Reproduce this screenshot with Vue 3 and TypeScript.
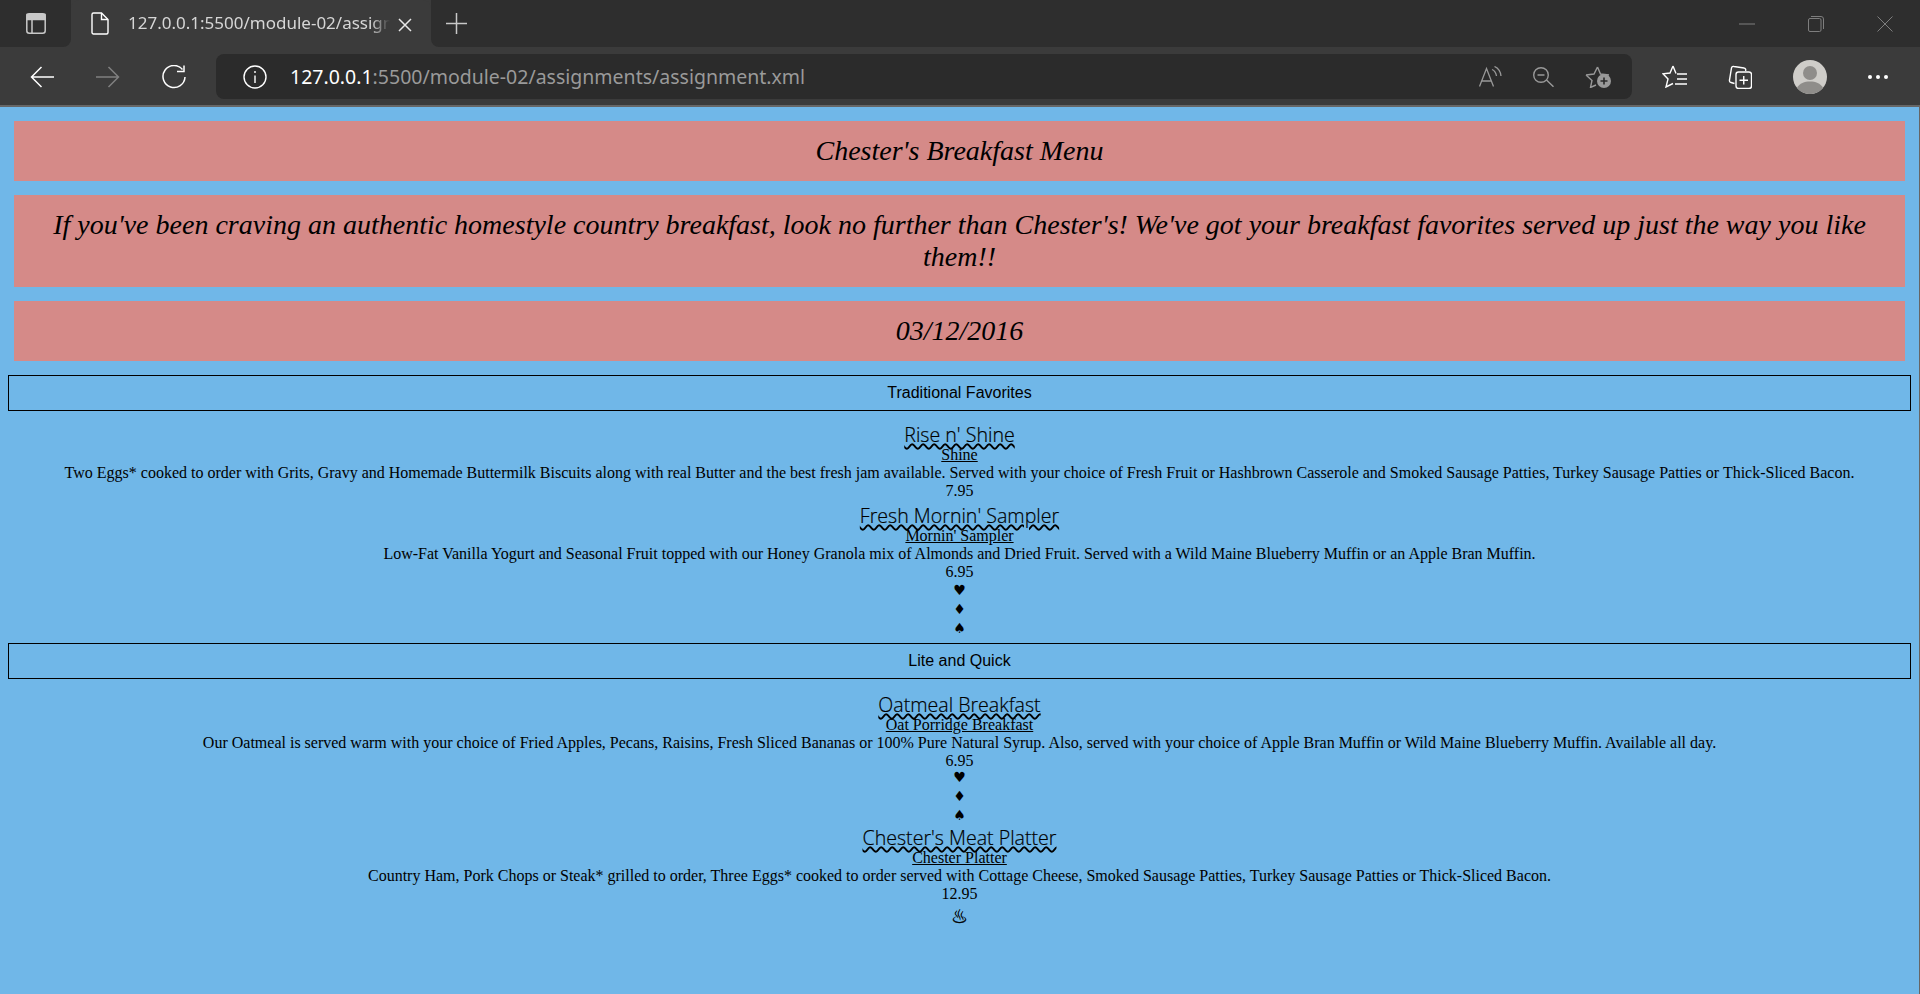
<script setup lang="ts">
interface MenuItem {
  name: string;
  alt: string;
  desc: string;
  price: string;
  marks: string[];
}

const favorites: MenuItem[] = [
  {
    name: "Rise n' Shine",
    alt: "Shine",
    desc: "Two Eggs* cooked to order with Grits, Gravy and Homemade Buttermilk Biscuits along with real Butter and the best fresh jam available. Served with your choice of Fresh Fruit or Hashbrown Casserole and Smoked Sausage Patties, Turkey Sausage Patties or Thick-Sliced Bacon.",
    price: "7.95",
    marks: [],
  },
  {
    name: "Fresh Mornin' Sampler",
    alt: "Mornin' Sampler",
    desc: "Low-Fat Vanilla Yogurt and Seasonal Fruit topped with our Honey Granola mix of Almonds and Dried Fruit. Served with a Wild Maine Blueberry Muffin or an Apple Bran Muffin.",
    price: "6.95",
    marks: ["♥", "♦", "♠"],
  },
];

const lite: MenuItem[] = [
  {
    name: "Oatmeal Breakfast",
    alt: "Oat Porridge Breakfast",
    desc: "Our Oatmeal is served warm with your choice of Fried Apples, Pecans, Raisins, Fresh Sliced Bananas or 100% Pure Natural Syrup. Also, served with your choice of Apple Bran Muffin or Wild Maine Blueberry Muffin. Available all day.",
    price: "6.95",
    marks: ["♥", "♦", "♠"],
  },
  {
    name: "Chester's Meat Platter",
    alt: "Chester Platter",
    desc: "Country Ham, Pork Chops or Steak* grilled to order, Three Eggs* cooked to order served with Cottage Cheese, Smoked Sausage Patties, Turkey Sausage Patties or Thick-Sliced Bacon.",
    price: "12.95",
    marks: ["♨"],
  },
];

const sections = [
  { title: "Traditional Favorites", items: favorites },
  { title: "Lite and Quick", items: lite },
];
</script>

<template>
  <div class="browser">
    <div class="tabstrip">
      <div class="tab-toggle">
        <svg width="20" height="21" viewBox="0 0 20 21" fill="none" stroke="#c8c8c8" stroke-width="1.5">
          <rect x="0.8" y="0.8" width="18.4" height="19.4" rx="2.5" />
          <path d="M1 1.500h18v5H1z" fill="#c8c8c8" />
          <path d="M6 6.500v14" />
        </svg>
      </div>
      <div class="tab">
        <svg class="tab-doc" width="18" height="23" viewBox="0 0 18 23" fill="none" stroke="#fff" stroke-width="1.4">
          <path d="M1 2.500A1.500 1.500 0 0 1 2.500 1h8l6.500 6.500v13a1.500 1.500 0 0 1-1.500 1.500h-13A1.500 1.500 0 0 1 1 20.500z" />
          <path d="M10.500 1v6.500H17" />
        </svg>
        <span class="tab-title">127.0.0.1:5500/module-02/assign</span>
        <svg class="tab-close" width="14" height="14" viewBox="0 0 14 14" stroke="#e8e8e8" stroke-width="1.5">
          <path d="M1 1l12 12M13 1L1 13" />
        </svg>
      </div>
      <div class="strip-rest">
        <svg class="new-tab" width="21" height="21" viewBox="0 0 21 21" stroke="#c8c8c8" stroke-width="1.5">
          <path d="M10.500 0v21M0 10.500h21" />
        </svg>
        <div class="window-btns">
          <svg width="16" height="16" viewBox="0 0 16 16" stroke="#7e7e7e" stroke-width="1">
            <path d="M0 8h16" />
          </svg>
          <svg width="16" height="16" viewBox="0 0 16 16" fill="none" stroke="#7e7e7e" stroke-width="1">
            <rect x="0.500" y="2.500" width="12.500" height="13" rx="1.500" />
            <path d="M3 .5h10a2.500 2.500 0 0 1 2.500 2.500v10" />
          </svg>
          <svg width="16" height="16" viewBox="0 0 16 16" stroke="#7e7e7e" stroke-width="1">
            <path d="M.5.5l15 15M15.500.5l-15 15" />
          </svg>
        </div>
      </div>
    </div>

    <div class="toolbar">
      <svg class="nav-back" width="24" height="22" viewBox="0 0 24 22" fill="none" stroke="#fff" stroke-width="1.500">
        <path d="M24 11H1.500M11.500 1L1.500 11l10 10" />
      </svg>
      <svg class="nav-forward" width="24" height="22" viewBox="0 0 24 22" fill="none" stroke="#808080" stroke-width="1.500">
        <path d="M0 11h22.500M12.500 1l10 10-10 10" />
      </svg>
      <svg class="nav-reload" width="24" height="24" viewBox="0 0 24 24" fill="none" stroke="#fff" stroke-width="1.500">
        <path d="M20.500 4.500A11 11 0 1 0 23 12" />
        <path d="M22 .5v6h-7" />
      </svg>
      <div class="address">
        <svg width="24" height="24" viewBox="0 0 24 24" fill="none" stroke="#fff" stroke-width="1.400">
          <circle cx="12" cy="12" r="11" />
          <path d="M12 10.500v7.500M12 6v2" />
        </svg>
        <span class="url"><b>127.0.0.1</b>:5500/module-02/assignments/assignment.xml</span>
        <div class="address-icons">
          <svg width="23" height="21" viewBox="0 0 23 21" fill="none" stroke="#999" stroke-width="1.300">
            <path d="M.5 20.500L7.500 2.500l7 18M2.500 15h10" />
            <path d="M13 3.500c2.500 1 4 3.500 4.500 6.500M15.500.5c3.500 1.500 6 5 6.500 9.500" />
          </svg>
          <svg width="21" height="20" viewBox="0 0 21 20" fill="none" stroke="#999" stroke-width="1.400">
            <circle cx="8" cy="8" r="7.300" />
            <path d="M4.500 8h7M13.500 13l7 6.800" />
          </svg>
          <svg width="27" height="22" viewBox="0 0 27 22" fill="none" stroke="#999" stroke-width="1.400">
            <path d="M12.500 1l3 7 8.500 1M1 9l8-1 3.500-7M1 9l6 5.500L5.500 21.500l5.500-2.500" />
            <circle cx="19" cy="15" r="7" fill="#999" stroke="none" />
            <path d="M19 11.500v7M15.500 15h7" stroke="#2b2b2b" stroke-width="1.600" />
          </svg>
        </div>
      </div>
      <div class="tool-icons">
        <svg width="25" height="23" viewBox="0 0 25 23" fill="none" stroke="#fff" stroke-width="1.400">
          <path d="M11 1l3 7.500M11 1L8 8l-7 .8 5 5.200-2 8 7-3.500M15 9h10M15 14h10M13 19h12" />
        </svg>
        <svg width="24" height="24" viewBox="0 0 24 24" fill="none" stroke="#fff" stroke-width="1.400">
          <path d="M6.500 18.500L3 17.500a2 2 0 0 1-1.500-2.500L3.500 3A2 2 0 0 1 6 1.500l10 1.500a2 2 0 0 1 1.500 3" />
          <rect x="8" y="7" width="15.500" height="16.500" rx="2.500" />
          <path d="M15.750 11v8.500M11.500 15.250h8.500" />
        </svg>
        <svg width="34" height="34" viewBox="0 0 34 34">
          <circle cx="17" cy="17" r="17" fill="#cfcdc9" />
          <circle cx="17" cy="13" r="7" fill="#8f8d8a" />
          <path d="M4 28c2.500-5 7.500-6.500 13-6.500s10.500 1.500 13 6.500a17 17 0 0 1-26 0z" fill="#8f8d8a" />
        </svg>
        <svg class="tool-more" width="20" height="4" viewBox="0 0 20 4" fill="#fff">
          <circle cx="2" cy="2" r="2" />
          <circle cx="10" cy="2" r="2" />
          <circle cx="18" cy="2" r="2" />
        </svg>
      </div>
    </div>
    <div class="toolbar-line" />

    <main class="page">
      <header class="banners">
        <h1 class="banner">Chester's Breakfast Menu</h1>
        <p class="banner">If you've been craving an authentic homestyle country breakfast, look no further than Chester's! We've got your breakfast favorites served up just the way you like them!!</p>
        <p class="banner">03/12/2016</p>
      </header>

      <section v-for="section in sections" :key="section.title" class="section">
        <h2 class="section-title">{{ section.title }}</h2>
        <article v-for="item in section.items" :key="item.name" class="item">
          <div class="item-name">{{ item.name }}</div>
          <div class="item-alt">{{ item.alt }}</div>
          <div>{{ item.desc }}</div>
          <div>{{ item.price }}</div>
          <div v-if="item.marks.length" class="marks">
            <div v-for="mark in item.marks" :key="mark" class="mark" :class="{ springs: mark === '♨' }">{{ mark }}</div>
          </div>
        </article>
      </section>
    </main>
  </div>
</template>

<style>
html,
body {
  margin: 0;
  background: #70b7e8;
}
</style>

<style scoped>
.browser {
  min-height: 994px;
  display: flex;
  flex-direction: column;
  background: #70b7e8;
  font-family: "Liberation Serif", serif;
  color: #000;
}

/* browser chrome */
.tabstrip {
  height: 48px;
  flex: none;
  background: #3b3b3b;
  display: flex;
  font-family: "Noto Sans", sans-serif;
}

.tab-toggle {
  width: 71px;
  height: 47px;
  box-sizing: border-box;
  padding: 13px 0 0 26px;
  background: #2e2e2e;
  border-radius: 0 0 8px 0;
}

.tab {
  width: 360px;
  height: 47px;
  box-sizing: border-box;
  padding: 12px 19px 0 20px;
  background: #3b3b3b;
  border-radius: 8px 8px 0 0;
  display: flex;
}

.tab-doc {
  flex: none;
}

.tab-title {
  margin-left: 19px;
  flex: 1;
  white-space: nowrap;
  font-size: 17px;
  line-height: 22px;
  color: #d6d6d6;
  -webkit-mask-image: linear-gradient(90deg, #000 90%, transparent 97%);
  mask-image: linear-gradient(90deg, #000 90%, transparent 97%);
}

.tab-close {
  flex: none;
  margin-top: 6px;
}

.strip-rest {
  flex: 1;
  height: 47px;
  background: #2e2e2e;
  border-radius: 0 0 0 8px;
  display: flex;
}

.new-tab {
  margin: 13px 0 0 15px;
}

.window-btns {
  margin: 16px 27px 0 auto;
  display: flex;
  gap: 53px;
}

.toolbar {
  height: 57px;
  flex: none;
  background: #3b3b3b;
  display: flex;
  align-items: center;
  font-family: "Noto Sans", sans-serif;
}

.nav-back {
  margin-left: 30px;
}

.nav-forward {
  margin-left: 42px;
}

.nav-reload {
  margin-left: 42px;
}

.address {
  margin-left: 30px;
  width: 1416px;
  height: 45px;
  box-sizing: border-box;
  padding: 0 20px 0 27px;
  background: #2b2b2b;
  border-radius: 8px;
  display: flex;
  align-items: center;
}

.url {
  margin-left: 23px;
  font-size: 19.5px;
  color: #9a9a9a;
  white-space: nowrap;
}

.url b {
  font-weight: 400;
  color: #fff;
}

.address-icons {
  margin-left: auto;
  display: flex;
  align-items: center;
  gap: 31px;
}

.tool-icons {
  padding-left: 30px;
  display: flex;
  align-items: center;
  gap: 41px;
}

.toolbar-line {
  height: 2px;
  flex: none;
  background: #666;
}

/* page */
.page {
  flex: 1;
  padding: 8px;
  border-right: 1px solid #666;
  font-size: 16px;
  line-height: 18px;
  text-align: center;
}

.banners {
  padding: 6px 6px 4px;
  display: flex;
  flex-direction: column;
  gap: 14px;
}

.banner {
  margin: 0;
  padding: 14px;
  background: #d58a88;
  font-size: 28px;
  font-style: italic;
  font-weight: 400;
  line-height: 32px;
}

.section {
  margin-top: 10px;
}

.section-title {
  margin: 0 0 8px;
  padding: 8px;
  border: 1px solid #000;
  font: 400 16px/18px "Liberation Sans", sans-serif;
}

.section + .section .section-title {
  margin-bottom: 10px;
}

.item-name {
  padding-top: 4px;
  font: 300 19.6px/23px "Open Sans", "Noto Sans", sans-serif;
  -webkit-text-stroke: 0.2px #000;
  text-decoration: underline wavy #000 1.5px;
  text-underline-offset: 1px;
}

.item-alt {
  text-decoration: underline;
}

.marks {
  margin: -2px 0 -3px;
}

.section:first-of-type .marks {
  margin: 0 0 -5px;
}

.mark {
  font-family: "DejaVu Sans", sans-serif;
  font-size: 14px;
  line-height: 19px;
}

.mark.springs {
  margin-top: 6px;
  font-size: 19px;
  font-weight: 700;
  -webkit-text-stroke: 0.4px #000;
}
</style>
